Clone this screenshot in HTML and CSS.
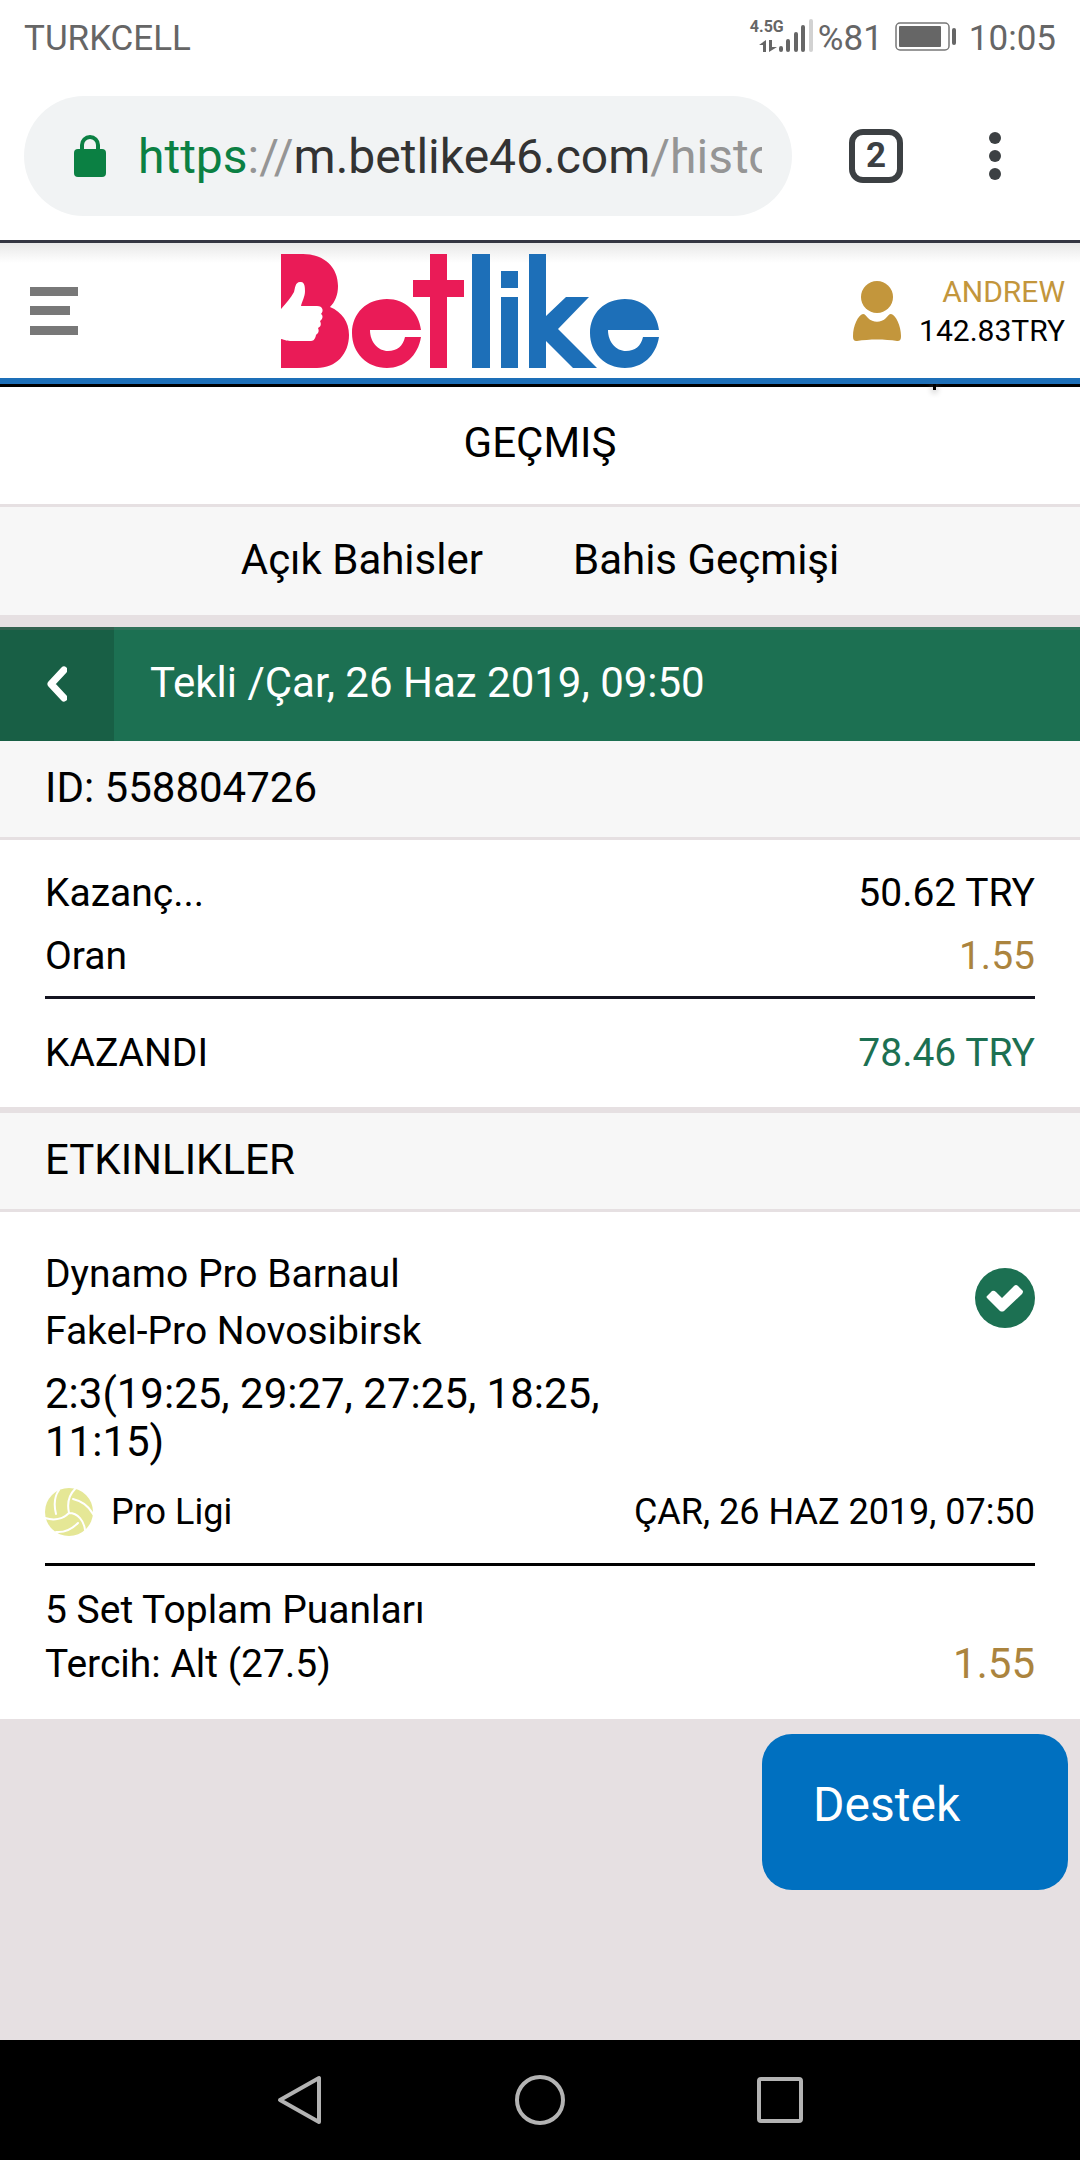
FILE: index.html
```html
<!DOCTYPE html>
<html lang="tr">
<head>
<meta charset="utf-8">
<meta name="viewport" content="width=device-width, initial-scale=1">
<title>Betlike – Geçmiş</title>
<link rel="stylesheet" href="styles.css">
</head>
<body>
<div class="statusbar">
  <span>TURKCELL</span>
  <div class="statusbar-right">
    <div class="network">
      <span class="network-type">4.5G</span>
      <svg width="64" height="34" viewBox="0 0 64 34" aria-hidden="true">
        <path d="M16 21v12h-3v-7h-4zM19 33V21h3v7h5z" fill="#666"/>
        <g stroke-width="4" stroke-linecap="round" stroke="#666">
          <path d="M31 29v2M38 22v9M46 15v16M53 8v23"/>
          <path d="M61 2v29" stroke="#d2d2d2"/>
        </g>
      </svg>
    </div>
    <span>%81</span>
    <svg class="battery" width="62" height="30" viewBox="0 0 62 30" aria-hidden="true">
      <rect x="1" y="1" width="53" height="27" rx="4" fill="none" stroke="#777" stroke-width="1.5"/>
      <rect x="4" y="4" width="42" height="21" rx="1" fill="#666"/>
      <rect x="57" y="6" width="4" height="17" rx="2" fill="#666"/>
    </svg>
    <span>10:05</span>
  </div>
</div>

<div class="browserbar">
  <div class="omnibox">
    <svg width="32" height="42" viewBox="0 0 32 42" aria-hidden="true">
      <rect x="0" y="14" width="32" height="28" rx="4" fill="#0b8043"/>
      <path d="M8 16v-6a8 8 0 0 1 16 0v6" fill="none" stroke="#0b8043" stroke-width="4"/>
    </svg>
    <div class="url"><span class="url-scheme">https</span><span class="url-dim">://</span>m.betlike46.com<span class="url-dim">/histo</span></div>
  </div>
  <button class="tabcount" type="button">2</button>
  <button type="button" aria-label="Menu">
    <svg width="12" height="48" viewBox="0 0 12 48"><g fill="#3c4043"><circle cx="6" cy="6" r="6"/><circle cx="6" cy="24" r="6"/><circle cx="6" cy="42" r="6"/></g></svg>
  </button>
</div>

<header class="siteheader">
  <button class="menu" type="button" aria-label="Menü">
    <svg width="48" height="48" viewBox="0 0 48 48"><path d="M0 0h48v9H0zM0 19h40v9H0zM0 39h48v9H0z" fill="#787878"/></svg>
  </button>
  <a class="logo" href="#" aria-label="Betlike">
    <svg width="378" height="114" viewBox="0 0 378 114">
      <g fill="#ea1b57">
        <path d="M0 0h22C44 0 57 14 57 32c0 9-3 16-8 21 12 5 19 15 19 28 0 19-13 33-32 33H0z"/>
        <path d="M140 76H89c0 12 8 21 18 21 9 0 15-5 17-14h16c-3 19-17 31-34 31-20 0-35-15-35-35s15-34 35-34c18 0 32 13 34 31z"/>
        <path d="M149 0h17v26h17v17h-17v71h-17V43h-17V26h17z"/>
      </g>
      <path fill="#fff" d="M0 55C5 49 10 44 13 38c1-3 1-10 6-10 5-1 5 6 5 9 0 6-3 10-4 15h16c6 0 7 5 4 8 3 2 1 6-1 7 2 4 0 6-2 7 2 4-1 6-2 7-1 5-3 6-6 6H11c-5 0-7-1-11-2z"/>
      <g fill="#1d6fb8">
        <path d="M191 0h18v114h-18zM220 17h17v17h-17zM220 43h17v71h-17z"/>
        <path d="M248 0h17v62l20-19h23l-31 32 39 39h-24l-27-27v27h-17z"/>
        <path d="M378 76h-51c0 12 8 21 18 21 9 0 15-5 17-14h16c-3 19-17 31-34 31-20 0-35-15-35-35s15-34 35-34c18 0 32 13 34 31z"/>
      </g>
    </svg>
  </a>
  <a class="account" href="#">
    <svg width="48" height="62" viewBox="0 0 48 62" aria-hidden="true">
      <g fill="#c3963c">
        <circle cx="24" cy="17" r="16"/>
        <path d="M10 34c2 0 3 2 5 4 5 5 13 5 18 0 2-2 3-4 5-4 5 1 10 12 10 22 0 4-1 5-4 5-12-2-28-2-40 0-3 0-4-1-4-5 0-10 5-21 10-22z"/>
      </g>
    </svg>
    <span class="account-text"><span class="account-name">ANDREW</span><span>142.83TRY</span></span>
  </a>
</header>

<main>
  <h1 class="title">GEÇMIŞ</h1>
  <nav class="tabs">
    <a href="#">Açık Bahisler</a>
    <a href="#">Bahis Geçmişi</a>
  </nav>

  <div class="betbar">
    <button class="back" type="button" aria-label="Geri">
      <svg width="20" height="36" viewBox="0 0 20 36"><path d="M17 4L4 18l13 14" fill="none" stroke="#fff" stroke-width="7" stroke-linecap="round" stroke-linejoin="round"/></svg>
    </button>
    <h2 class="betbar-title">Tekli /Çar, 26 Haz 2019, 09:50</h2>
  </div>

  <h3 class="section-head">ID: 558804726</h3>
  <section class="summary">
    <div class="row"><span>Kazanç...</span><span>50.62 TRY</span></div>
    <div class="row"><span>Oran</span><span class="odds">1.55</span></div>
    <div class="row row-total"><span>KAZANDI</span><span class="won">78.46 TRY</span></div>
  </section>

  <h3 class="section-head section-events">ETKINLIKLER</h3>
  <section class="event">
    <div class="event-top">
      <div class="event-teams">
        <p class="team">Dynamo Pro Barnaul</p>
        <p class="team">Fakel-Pro Novosibirsk</p>
        <p class="score">2:3(19:25, 29:27, 27:25, 18:25, 11:15)</p>
      </div>
      <svg class="check" width="60" height="60" viewBox="0 0 60 60" role="img" aria-label="Kazandı">
        <circle cx="30" cy="30" r="30" fill="#1c7052"/>
        <path d="M12 28l5-5q2-1 4 1l6 6 12-12q2-2 4 0l5 5q0 2-1 3L29 43q-2 1-4 0L12 30q-1-1 0-2z" fill="#fff"/>
      </svg>
    </div>
    <div class="league">
      <svg width="48" height="48" viewBox="0 0 48 48" aria-hidden="true">
        <circle cx="24" cy="24" r="24" fill="#e5e796"/>
        <g fill="none" stroke="#fff" stroke-width="2" stroke-linecap="round">
          <path d="M30 1c-7 7-8 15-6 24 9 0 15 8 16 17M24 25c-6 6-15 8-24 5M14 2c-5 7-5 16-3 24M28 11c9 2 16 8 20 15M33 35c-5 5-12 10-22 9"/>
        </g>
      </svg>
      <span>Pro Ligi</span>
      <time class="league-time" datetime="2019-06-26T07:50">ÇAR, 26 HAZ 2019, 07:50</time>
    </div>
    <div class="pick">
      <div><p>5 Set Toplam Puanları</p><p>Tercih: Alt (27.5)</p></div>
      <span class="pick-odds">1.55</span>
    </div>
  </section>
</main>

<div class="footer-space">
  <button class="support" type="button">Destek</button>
</div>

<nav class="navbar">
  <button type="button" aria-label="Geri"><svg width="50" height="50" viewBox="0 0 50 50"><path d="M44 3v44L5 25z" fill="none" stroke="#b3b3b3" stroke-width="4" stroke-linejoin="round"/></svg></button>
  <button type="button" aria-label="Ana ekran"><svg width="50" height="50" viewBox="0 0 50 50"><circle cx="25" cy="25" r="23" fill="none" stroke="#b3b3b3" stroke-width="4"/></svg></button>
  <button type="button" aria-label="Son uygulamalar"><svg width="50" height="50" viewBox="0 0 50 50"><rect x="4" y="4" width="42" height="42" rx="2" fill="none" stroke="#b3b3b3" stroke-width="4"/></svg></button>
</nav>
</body>
</html>
```

FILE: styles.css
```css
* { box-sizing: border-box; }

body {
  margin: 0;
  min-height: 100vh;
  display: flex;
  flex-direction: column;
  background: #e6e0e2;
  color: #000;
  font-family: Roboto, "Liberation Sans", sans-serif;
  font-size: 39px;
}

h1, h2, h3, p { margin: 0; font-weight: 400; }
a { color: inherit; text-decoration: none; }
button {
  padding: 0;
  border: 0;
  background: none;
  color: inherit;
  font: inherit;
}
svg { display: block; flex: none; }

/* phone status bar */
.statusbar {
  display: flex;
  justify-content: space-between;
  align-items: center;
  height: 72px;
  padding: 4px 24px 0;
  background: #fff;
  color: #666;
  font-size: 35px;
}
.statusbar-right { display: flex; align-items: center; }
.network { position: relative; margin: 0 4px 4px 0; }
.network-type {
  position: absolute;
  left: 0;
  top: 0;
  font-size: 16px;
  line-height: 16px;
  font-weight: 700;
}
.battery { margin: 0 12px 2px; }

/* browser toolbar */
.browserbar {
  display: flex;
  align-items: center;
  height: 168px;
  padding: 0 79px 0 24px;
  background: #fff;
}
.omnibox {
  display: flex;
  align-items: center;
  gap: 32px;
  flex: 1;
  min-width: 0;
  height: 120px;
  padding: 0 30px 0 50px;
  border-radius: 60px;
  background: #f1f3f4;
}
.url {
  flex: 1;
  overflow: hidden;
  white-space: nowrap;
  color: #333;
  font-size: 48px;
}
.url-scheme { color: #0b8043; }
.url-dim { color: #959595; }
.tabcount {
  width: 54px;
  height: 54px;
  margin: 0 86px 0 57px;
  border: 6px solid #3c4043;
  border-radius: 14px;
  color: #3c4043;
  font-size: 35px;
  line-height: 42px;
  font-weight: 700;
}

/* site header */
.siteheader {
  position: relative;
  display: grid;
  grid-template-columns: auto 1fr auto;
  align-items: center;
  height: 147px;
  padding: 0 15px 6px 30px;
  border-top: 3px solid #343642;
  border-bottom: 3px solid #000;
  background: linear-gradient(#e8e8e8, #fff 20px);
  box-shadow: inset 0 -6px #1d6fb8;
}
/* pointer under the account block */
.siteheader::after {
  content: "";
  position: absolute;
  top: 100%;
  right: 144px;
  width: 3px;
  height: 6px;
  background: #000;
  box-shadow: 0 2px 6px #888;
}
.menu { width: 57px; }
.logo { justify-self: center; }
.account {
  display: flex;
  align-items: center;
  gap: 18px;
}
.account-text {
  display: flex;
  flex-direction: column;
  text-align: right;
  font-size: 30px;
  line-height: 39px;
}
.account-name { color: #c3963c; }

/* page title and tabs */
.title {
  height: 117px;
  background: #fff;
  font-size: 42px;
  line-height: 111px;
  text-align: center;
}
.tabs {
  display: flex;
  justify-content: center;
  gap: 90px;
  height: 111px;
  border-top: 3px solid #e6e0e2;
  background: #f7f7f7;
  font-size: 42px;
  line-height: 105px;
}

/* bet details */
.betbar {
  display: flex;
  height: 114px;
  margin-top: 12px;
  background: #1c7052;
  box-shadow: inset 0 3px #2f7159;
  color: #fff;
}
.back {
  display: flex;
  align-items: center;
  justify-content: center;
  width: 114px;
  background: #185f45;
  box-shadow: inset 0 3px #32614f;
}
.betbar-title {
  padding-left: 36px;
  font-size: 42px;
  line-height: 111px;
}
.section-head {
  height: 99px;
  padding: 0 45px;
  border-bottom: 3px solid #e6e0e2;
  background: #f7f7f7;
  font-size: 42px;
  line-height: 93px;
}
.section-events { margin-top: 6px; }
.summary {
  padding: 22px 45px 0;
  background: #fff;
}
.row {
  display: flex;
  justify-content: space-between;
  line-height: 63px;
}
.row-total {
  margin-top: 8px;
  border-top: 3px solid #141420;
  line-height: 108px;
}
.odds, .pick-odds { color: #ab843e; }
.won { color: #1c7052; }

/* event */
.event {
  padding: 34px 45px 28px;
  background: #fff;
}
.event-top {
  display: flex;
  justify-content: space-between;
}
.event-teams { width: 60%; }
.team { line-height: 57px; }
.score {
  margin-top: 10px;
  font-size: 42px;
  line-height: 48px;
}
.check { margin-top: 22px; }
.league {
  display: flex;
  align-items: center;
  gap: 18px;
  margin-top: 22px;
  padding-bottom: 27px;
  border-bottom: 3px solid #000;
  font-size: 36px;
}
.league-time { margin-left: auto; }
.pick {
  display: flex;
  justify-content: space-between;
  align-items: flex-end;
  padding-top: 17px;
  line-height: 54px;
}
.pick-odds { font-size: 42px; }

/* support button */
.footer-space {
  display: flex;
  flex: 1;
  justify-content: flex-end;
  align-items: flex-start;
  padding: 15px 12px;
}
.support {
  width: 306px;
  height: 156px;
  padding: 0 51px 16px;
  border-radius: 30px;
  background: #0070c0;
  color: #fff;
  font-size: 48px;
  text-align: left;
}

/* phone navigation bar */
.navbar {
  display: flex;
  justify-content: center;
  gap: 190px;
  padding: 35px 0;
  background: #000;
}
```
